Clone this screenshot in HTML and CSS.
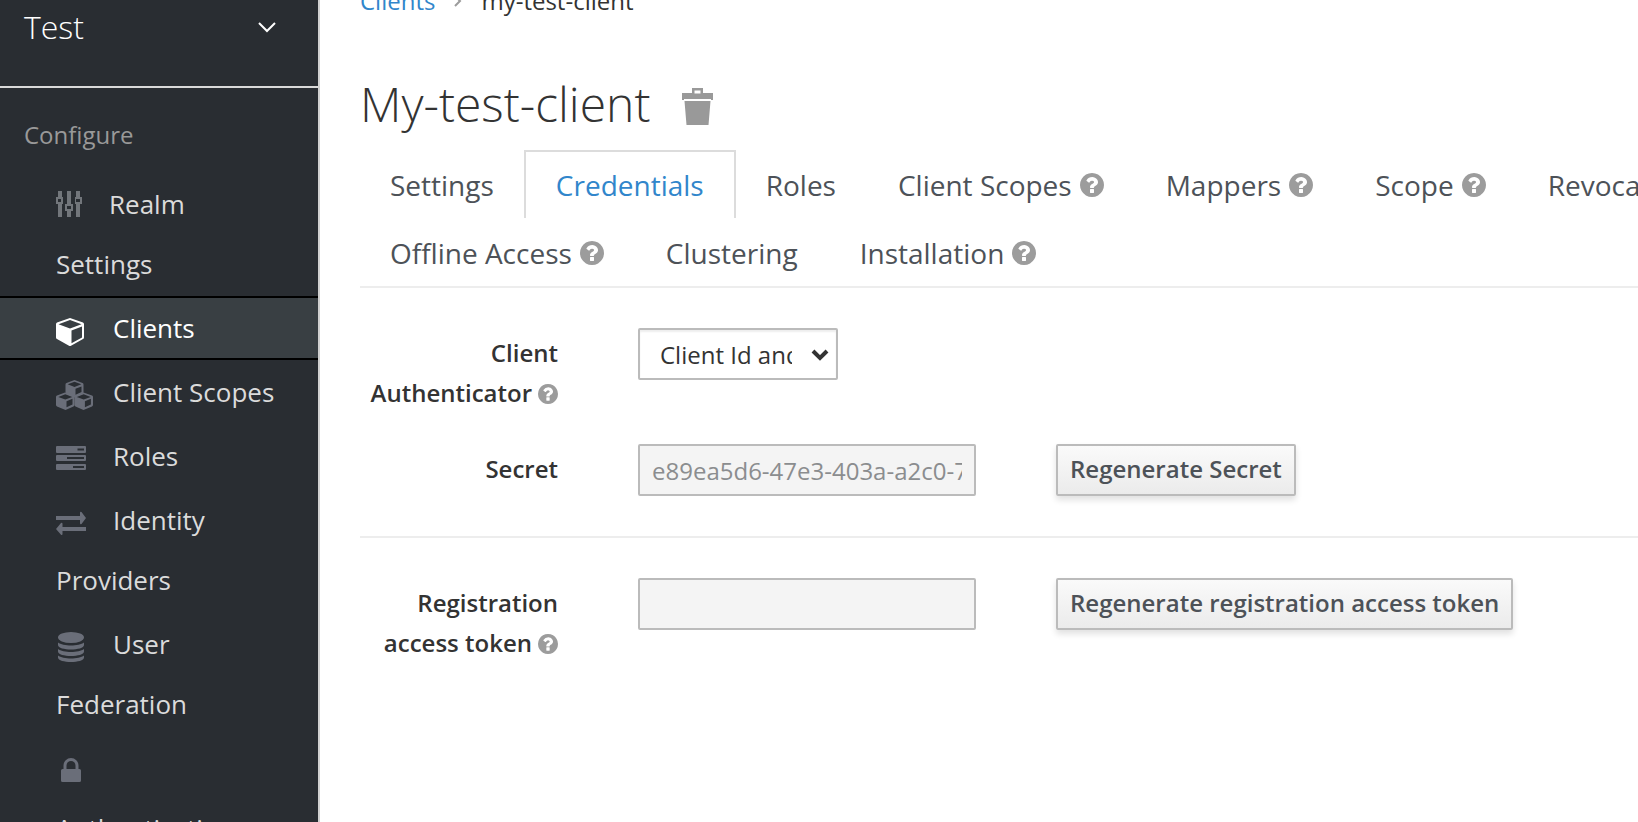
FILE: index.html
```html
<!DOCTYPE html>
<html lang="en">
<head>
<meta charset="utf-8">
<title>My-test-client</title>
<link rel="stylesheet" href="styles.css">
</head>
<body>
<svg class="sprite" aria-hidden="true">
  <symbol id="help" viewBox="128 128 1536 1536"><path d="M1024 1376v-192q0-14-9-23t-23-9h-192q-14 0-23 9t-9 23v192q0 14 9 23t23 9h192q14 0 23-9t9-23zm256-672q0-88-55.500-163t-138.500-116-170-41q-243 0-371 213-15 24 8 42l132 100q7 6 19 6 16 0 25-12 53-68 86-92 34-24 86-24 48 0 85.500 26t37.500 59q0 38-20 61t-68 45q-63 28-115.500 86.500t-52.500 125.500v36q0 14 9 23t23 9h192q14 0 23-9t9-23q0-19 21.500-49.500t54.500-49.500q32-18 49-28.500t46-35 44.500-48 28-60.500 12.500-81zm384 192q0 209-103 385.500t-279.500 279.500-385.500 103-385.500-103-279.500-279.500-103-385.500 103-385.500 279.500-279.500 385.500-103 385.500 103 279.500 279.500 103 385.500z"/></symbol>
</svg>
<div class="app">
  <aside class="sidebar">
    <button class="realm" type="button">Test
      <svg class="realm-arrow" viewBox="0 0 20 12" aria-hidden="true"><path d="M2 2l8 8 8-8"/></svg>
    </button>
    <nav>
      <h2 class="nav-title">Configure</h2>
      <ul class="nav-list">
        <li><a href="#"><svg class="icon icon-sliders" viewBox="0 0 36 32" aria-hidden="true"><path d="M2 0h4v6h1v7h-1v13h-4V13h-2V6h2zM11 0h4v13h2v7h-2v6h-4v-6h-2v-7h2zM20 0h4v6h2v7h-2v13h-4V13h-1V6h1z"/><path class="cut" d="M2 8h3v3h-3zM11 15h4v3h-4zM20 8h4v3h-4z"/></svg>Realm Settings</a></li>
        <li class="active"><a href="#"><svg class="icon" viewBox="0 0 40 32" aria-hidden="true"><path fill-rule="evenodd" d="M14 3l13 4.500q1 .5 1 1.500v13.500q0 1-1 1.500l-12 6.700q-1 .5-2 0L1 24q-1-.5-1-1.500V9q0-1 1-1.500zM14 5L2.500 9.200 14 13.500l11.500-4.300zM15.500 15.400v12.800L26 22.400V11.500z"/></svg>Clients</a></li>
        <li><a href="#"><svg class="icon" viewBox="0 0 40 32" aria-hidden="true"><path fill-rule="evenodd" d="M18.500 1l8 3q1 .4 1 1.400v8.200q0 1-1 1.400l-8 3.400-8-3.400q-1-.4-1-1.400V5.400q0-1 1-1.400zM18.500 2.700l-6.800 2.600 6.800 2.700 6.800-2.700zM19.500 9.700v6l6-2.600V7.400z"/><path fill-rule="evenodd" d="M9 13.500l8.500 3q1 .4 1 1.400v8.200q0 1-1 1.400L9.500 31 1 27.500q-1-.4-1-1.400v-8.200q0-1 1-1.400zM9.300 15.200l-7 2.700 7 2.700 7-2.700zM10.500 22.200v6l6-2.600v-5.900z"/><path fill-rule="evenodd" d="M27.500 13.500l8.500 3q1 .4 1 1.400v8.200q0 1-1 1.400L27.500 31l-8-3.500q-1-.4-1-1.400v-8.200q0-1 1-1.400zM27.700 15.200l-7 2.700 7 2.700 7-2.700zM28.900 22.200v6l6-2.600v-5.900z"/></svg>Client Scopes</a></li>
        <li><a href="#"><svg class="icon" viewBox="0 0 40 32" aria-hidden="true"><path fill-rule="evenodd" d="M1 3h28q1 0 1 1v5q0 1-1 1H1q-1 0-1-1V4q0-1 1-1zM21.500 5.500v2h6.500v-2zM1 12h28q1 0 1 1v4q0 1-1 1H1q-1 0-1-1v-4q0-1 1-1zM11 14v2h17v-2zM1 21h28q1 0 1 1v4q0 1-1 1H1q-1 0-1-1v-4q0-1 1-1zM17 23v2h11v-2z"/></svg>Roles</a></li>
        <li><a href="#"><svg class="icon" viewBox="0 0 40 32" aria-hidden="true"><path d="M0 9h24V6q0-2 1.500-1l4.500 6-4.500 6q-1.500 1-1.500-1v-3H0zM30 20v4H6.500v3q0 1.500-1.500.8L0 22l5-6q1.500-.8 1.500 1v3z"/></svg>Identity Providers</a></li>
        <li><a href="#"><svg class="icon" viewBox="0 0 40 32" aria-hidden="true"><ellipse cx="15" cy="6.500" rx="13" ry="5.500"/><path d="M2 11.500c5 4 21 4 26 0v2.500c0 6-26 6-26 0zM2 18c5 4 21 4 26 0v2.500c0 6-26 6-26 0zM2 24.500c5 4 21 4 26 0V26.500c0 6-26 6-26 0z"/></svg>User Federation</a></li>
        <li><a href="#"><svg class="icon" viewBox="0 0 40 32" aria-hidden="true"><path fill-rule="evenodd" d="M6.500 14h1V10.500a7.500 7.500 0 0 1 15 0V14h1q1.500 0 1.500 1.500v10q0 1.500-1.500 1.500h-17Q5 27 5 25.500v-10Q5 14 6.500 14zM10.500 14h9v-3.500a4.500 4.500 0 0 0-9 0z"/></svg>Authentication</a></li>
      </ul>
    </nav>
  </aside>
  <main class="main">
    <nav class="breadcrumb" aria-label="Breadcrumb">
      <a href="#">Clients</a>
      <svg class="crumb-arrow" viewBox="0 0 8 12" aria-hidden="true"><path d="M1 1l5 5-5 5"/></svg>
      <span>my-test-client</span>
    </nav>
    <header class="title-row">
      <h1>My-test-client</h1>
      <button class="trash" type="button" aria-label="Delete client"><svg viewBox="0 0 31 37" aria-hidden="true"><path fill-rule="evenodd" d="M10 0h11v5h10v7h-2v-1H2v1H0V5h10zM12.500 2.500v3h6v-3zM2.500 13h26l-2 24h-22z"/></svg></button>
    </header>
    <ul class="tabs">
      <li><a href="#">Settings</a></li>
      <li class="active"><a href="#">Credentials</a></li>
      <li><a href="#">Roles</a></li>
      <li><a href="#">Client Scopes<svg class="help" aria-hidden="true"><use href="#help"/></svg></a></li>
      <li><a href="#">Mappers<svg class="help" aria-hidden="true"><use href="#help"/></svg></a></li>
      <li><a href="#">Scope<svg class="help" aria-hidden="true"><use href="#help"/></svg></a></li>
      <li><a href="#">Revocation</a></li>
      <li><a href="#">Offline Access<svg class="help" aria-hidden="true"><use href="#help"/></svg></a></li>
      <li><a href="#">Clustering</a></li>
      <li><a href="#">Installation<svg class="help" aria-hidden="true"><use href="#help"/></svg></a></li>
    </ul>
    <form class="form">
      <div class="row">
        <label for="auth">Client Authenticator<svg class="help" aria-hidden="true"><use href="#help"/></svg></label>
        <div class="select">
          <select id="auth"><option>Client Id and Secret</option></select>
          <svg viewBox="0 0 18 12" aria-hidden="true"><path d="M2 2l7 7 7-7"/></svg>
        </div>
      </div>
      <div class="row">
        <label for="secret">Secret</label>
        <input id="secret" type="text" readonly value="e89ea5d6-47e3-403a-a2c0-7f1d9b52c604">
        <button class="btn" type="button">Regenerate Secret</button>
      </div>
    </form>
    <form class="form">
      <div class="row">
        <label for="token">Registration access token<svg class="help" aria-hidden="true"><use href="#help"/></svg></label>
        <input id="token" type="text" readonly>
        <button class="btn" type="button">Regenerate registration access token</button>
      </div>
    </form>
  </main>
</div>
</body>
</html>
```

FILE: styles.css
```css
* { box-sizing: border-box; }

body {
  margin: 0;
  height: 100vh;
  overflow: hidden;
  background: #fff;
  color: #333;
  font: 24px/40px "Open Sans", "Noto Sans", sans-serif;
}

a { color: inherit; text-decoration: none; }
ul { list-style: none; margin: 0; padding: 0; }
button, input, select { font: inherit; }
.sprite { display: none; }

.app { display: flex; height: 100%; }

.sidebar {
  flex: none;
  width: 320px;
  overflow: hidden;
  background: #292d32;
  border-right: 2px solid #d1d1d1;
}

.realm {
  display: flex;
  align-items: center;
  justify-content: space-between;
  width: 100%;
  height: 88px;
  padding: 0 41px 32px 24px;
  border: 0;
  border-bottom: 2px solid #d9d9d9;
  background: none;
  color: #fff;
  font-size: 32px;
  font-weight: 300;
}
.realm-arrow { width: 20px; height: 12px; fill: none; stroke: #fff; stroke-width: 2; }

.nav-title {
  margin: 0;
  padding: 27px 24px 17px;
  color: #999;
  font-size: 24px;
  font-weight: 400;
}

.nav-list a {
  display: block;
  padding: 0 40px 0 56px;
  border: solid transparent;
  border-width: 2px 0;
  color: #dbdbdb;
  font-size: 26px;
  line-height: 60px;
}
.nav-list .active a {
  background: #393f43;
  border-color: #000;
  color: #fff;
}
.icon {
  width: 40px;
  height: 32px;
  margin-right: 17px;
  vertical-align: middle;
  fill: #6a6e79;
}
.icon-sliders { width: 36px; fill: #72767b; }
.icon .cut { fill: #292d32; }
.active .icon { fill: #fff; }

.main {
  flex: 1;
  min-width: 0;
  overflow: hidden;
  padding-left: 40px;
}

.breadcrumb {
  display: flex;
  align-items: center;
  gap: 19px;
  margin-top: -19px;
}
.breadcrumb a { color: #3186cb; }
.crumb-arrow { width: 8px; height: 12px; fill: none; stroke: #9c9c9c; stroke-width: 2; }

.title-row {
  display: flex;
  align-items: center;
  gap: 32px;
  height: 129px;
  padding-top: 40px;
}
h1 { margin: 0; padding-bottom: 4px; font-size: 48px; font-weight: 300; line-height: 56px; }
.trash { padding: 2px 0 0; border: 0; background: none; line-height: 0; }
.trash svg { width: 31px; height: 37px; fill: #999; }

.tabs {
  display: flex;
  flex-wrap: wrap;
  margin-right: -120px;
  border-bottom: 2px solid #ededed;
}
.tabs li { margin-left: -2px; }
.tabs a {
  display: flex;
  align-items: center;
  height: 68px;
  padding: 0 30px;
  border: 2px solid transparent;
  border-bottom: 0;
  color: #4d5258;
  font-size: 28px;
}
.tabs .active a { border-color: #dcdcdc; color: #3186cb; }
.help { width: 24px; height: 24px; margin-left: 8px; fill: #9c9c9c; }

.form { padding: 40px 0; }
.form + .form { border-top: 2px solid #ededed; }
.row {
  display: grid;
  grid-template-columns: 198px 338px max-content;
  column-gap: 80px;
  align-items: start;
}
.row + .row { margin-top: 31px; }
.row label { padding-top: 5px; text-align: right; font-weight: 600; }
.row label .help { width: 20px; height: 20px; margin-left: 6px; vertical-align: -2px; }

input, select, .btn {
  height: 52px;
  border: 2px solid #bbb;
  border-radius: 2px;
}
input {
  width: 100%;
  padding: 0 12px;
  background: #f4f4f4;
  color: #8b8d8f;
}
.select { position: relative; width: 200px; }
select {
  width: 100%;
  display: block;
  padding: 2px 44px 0 20px;
  appearance: none;
  background: #fff;
  color: #333;
  box-shadow: inset 0 2px 2px rgba(0, 0, 0, .07);
}
.select svg {
  position: absolute;
  top: 21px;
  right: 9px;
  width: 18px;
  height: 12px;
  fill: none;
  stroke: #333;
  stroke-width: 4;
  pointer-events: none;
}
.btn {
  padding: 0 12px 2px;
  background: linear-gradient(#fafafa, #ebebeb);
  box-shadow: 0 4px 6px rgba(3, 3, 3, .12);
  color: #4d5258;
  font-weight: 600;
}
```
